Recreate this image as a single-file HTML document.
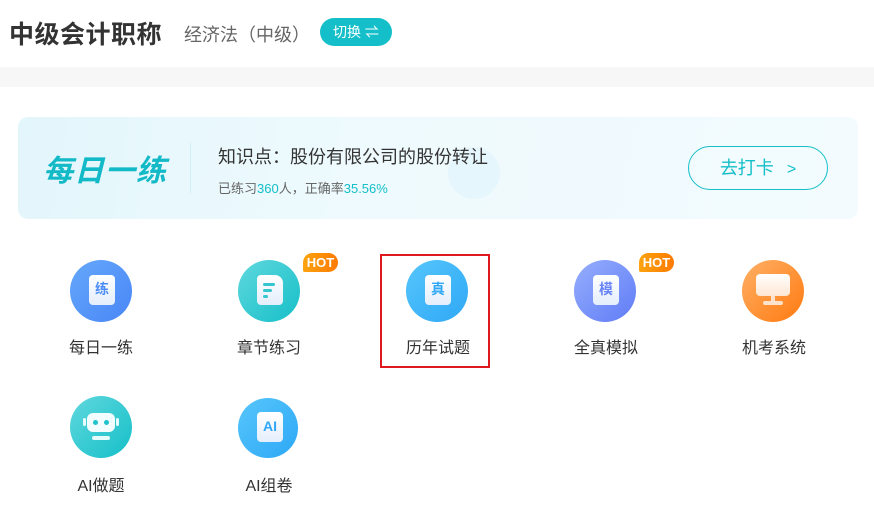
<!DOCTYPE html>
<html><head><meta charset="utf-8"><style>
*{margin:0;padding:0;box-sizing:border-box}
body{width:874px;height:506px;background:#fff;font-family:"Liberation Sans","Noto Sans CJK SC",sans-serif;color:#333;position:relative;overflow:hidden}
.abs{position:absolute}
.title{left:9px;top:15px;font-size:25px;font-weight:bold;color:#333;letter-spacing:0.5px}
.sub{left:184px;top:21px;font-size:18px;color:#666}
.sw{left:320px;top:18px;width:72px;height:28px;border-radius:14px;background:#14bfc9;color:#fff;font-size:14px;line-height:28px;text-align:center}
.band{left:0;top:67px;width:874px;height:20px;background:#f7f7f7}
.banner{left:18px;top:117px;width:840px;height:102px;border-radius:10px;background:linear-gradient(100deg,#e3f6fc 0%,#eefafd 40%,#f3fbfe 100%)}
.ico{width:62px;height:62px;border-radius:50%}
.lbl{font-size:16px;color:#333;width:140px;text-align:center}
.doc{position:absolute;left:19px;top:15px;width:26px;height:30px;border-radius:4px;background:linear-gradient(#fff,#e4eefc);font-size:14px;font-weight:bold;text-align:center;line-height:28px}
.hot{width:35px;height:19px;border-radius:10px 10px 10px 2px;background:linear-gradient(90deg,#fca30f,#ff7a00);color:#fff;font-size:13px;font-weight:bold;text-align:center;line-height:19px}
</style></head><body>
<div class="abs title">中级会计职称</div>
<div class="abs sub">经济法（中级）</div>
<div class="abs sw">切换 ⇌</div>
<div class="abs band"></div>
<div class="abs banner">
  <div class="abs" style="left:430px;top:30px;width:52px;height:52px;border-radius:50%;background:#e6f6fd"></div>
  <div class="abs" style="left:25px;top:29px;font-size:30px;font-weight:bold;font-style:italic;color:#12b9c6;letter-spacing:1px">每日一练</div>
  <div class="abs" style="left:172px;top:26px;width:1px;height:50px;background:#cdeff5"></div>
  <div class="abs" style="left:200px;top:26px;font-size:18px;color:#333">知识点：股份有限公司的股份转让</div>
  <div class="abs" style="left:200px;top:61px;font-size:13px;color:#666">已练习<span style="color:#14bfc9">360</span>人，正确率<span style="color:#14bfc9">35.56%</span></div>
  <div class="abs" style="left:670px;top:29px;width:140px;height:44px;border:1px solid #14bfc9;border-radius:22px;color:#14bfc9;font-size:18px;line-height:42px;text-align:center">去打卡 <span style="font-size:16px;margin-left:8px">&gt;</span></div>
</div>

<div class="abs ico" style="left:70px;top:260px;background:linear-gradient(135deg,#64a8fb,#4a86f6)"><div class="doc" style="color:#4c8cf6">练</div></div>
<div class="abs lbl" style="left:31px;top:334px">每日一练</div>

<div class="abs ico" style="left:238px;top:260px;background:linear-gradient(135deg,#5fd8dd,#16bfc9)"><div class="doc" style="color:#17c0ca;border-radius:4px 8px 4px 4px"><div class="abs" style="left:6px;top:8px;width:12px;height:3px;background:#35c6cf;border-radius:2px"></div><div class="abs" style="left:6px;top:14px;width:9px;height:3px;background:#35c6cf;border-radius:2px"></div><div class="abs" style="left:6px;top:20px;width:5px;height:3px;background:#35c6cf;border-radius:2px"></div></div></div>
<div class="abs lbl" style="left:199px;top:334px">章节练习</div>
<div class="abs hot" style="left:303px;top:253px">HOT</div>

<div class="abs ico" style="left:406px;top:260px;background:linear-gradient(135deg,#56c6fb,#2ea8f6)"><div class="doc" style="color:#2ea8f6">真</div></div>
<div class="abs lbl" style="left:368px;top:334px">历年试题</div>
<div class="abs" style="left:380px;top:254px;width:110px;height:114px;border:2px solid #e0191f"></div>

<div class="abs ico" style="left:574px;top:260px;background:linear-gradient(135deg,#96aefd,#5f7cf6)"><div class="doc" style="color:#6a85f5">模</div></div>
<div class="abs lbl" style="left:536px;top:334px">全真模拟</div>
<div class="abs hot" style="left:639px;top:253px">HOT</div>

<div class="abs ico" style="left:742px;top:260px;background:linear-gradient(135deg,#ffb066,#ff7a10)">
  <div class="abs" style="left:14px;top:14px;width:34px;height:22px;border-radius:4px;background:linear-gradient(#fff,#ffe6d2)"></div>
  <div class="abs" style="left:29px;top:36px;width:4px;height:6px;background:#ffe2cc"></div>
  <div class="abs" style="left:21px;top:41px;width:20px;height:4px;border-radius:2px;background:#ffe2cc"></div>
</div>
<div class="abs lbl" style="left:704px;top:334px">机考系统</div>

<div class="abs ico" style="left:70px;top:396px;background:linear-gradient(135deg,#5fd8dd,#16bfc9)">
  <div class="abs" style="left:17px;top:17px;width:28px;height:19px;border-radius:6px;background:#f2fdff"></div>
  <div class="abs" style="left:23px;top:24px;width:5px;height:5px;border-radius:50%;background:#1ec3cc"></div>
  <div class="abs" style="left:34px;top:24px;width:5px;height:5px;border-radius:50%;background:#1ec3cc"></div>
  <div class="abs" style="left:22px;top:40px;width:18px;height:4px;border-radius:2px;background:#e6fbfc"></div>
  <div class="abs" style="left:13px;top:22px;width:3px;height:8px;background:#e6fbfc;border-radius:2px"></div>
  <div class="abs" style="left:46px;top:22px;width:3px;height:8px;background:#e6fbfc;border-radius:2px"></div>
</div>
<div class="abs lbl" style="left:31px;top:472px">AI做题</div>

<div class="abs ico" style="left:238px;top:398px;width:60px;height:60px;background:linear-gradient(135deg,#56c6fb,#2ea8f6)"><div class="doc" style="color:#2ea8f6;top:14px">AI</div></div>
<div class="abs lbl" style="left:199px;top:472px">AI组卷</div>
</body></html>
